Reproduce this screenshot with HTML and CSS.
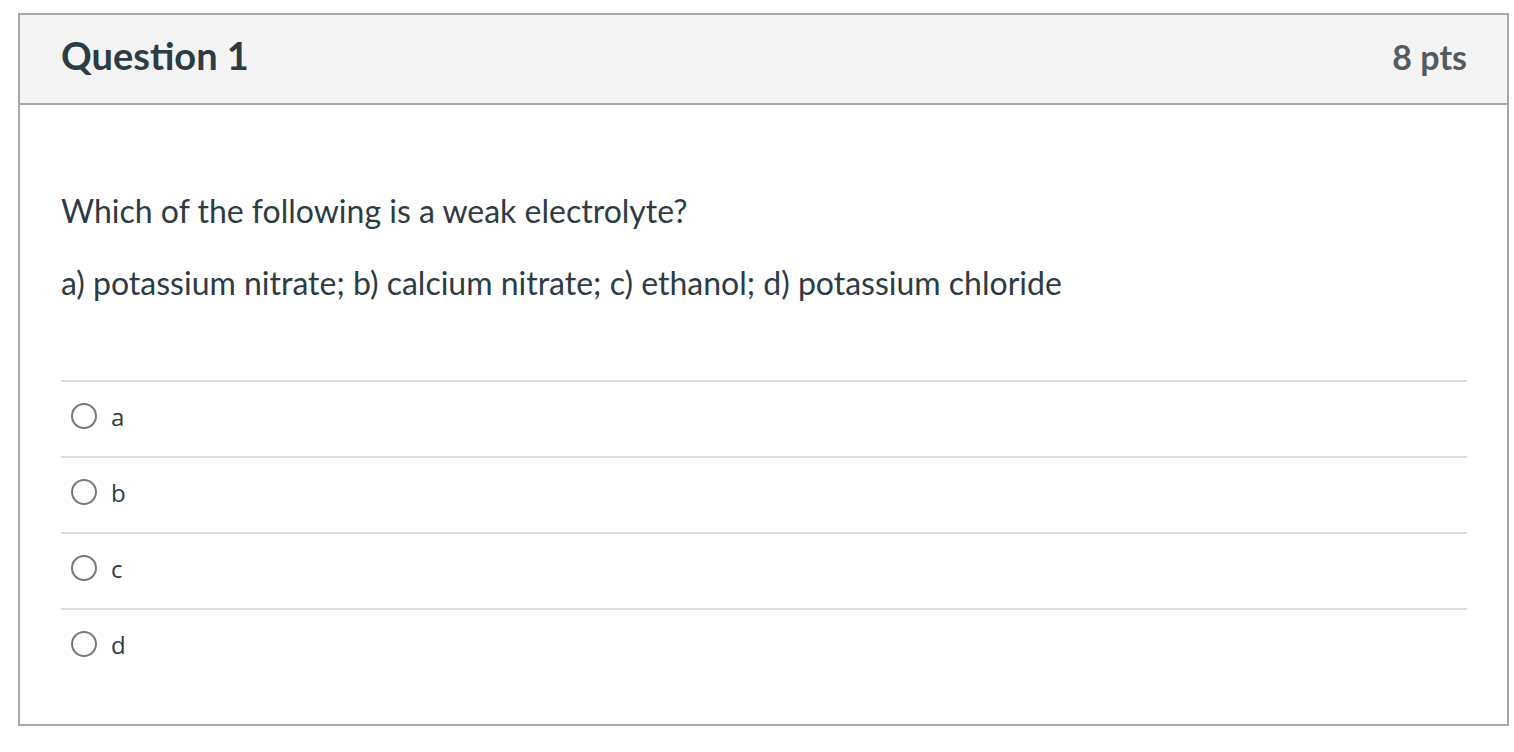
FILE: index.html
```html
<!DOCTYPE html>
<html lang="en">
<head>
<meta charset="utf-8">
<title>Question 1</title>
<link rel="stylesheet" href="styles.css">
</head>
<body>
<div class="quiz">
  <div class="quiz-header">
    <h2 class="quiz-title">Question 1</h2>
    <div class="quiz-points">8 pts</div>
  </div>
  <div class="quiz-body">
    <div class="question-text">
      <p>Which of the following is a weak electrolyte?</p>
      <p>a) potassium nitrate; b) calcium nitrate; c) ethanol; d) potassium chloride</p>
    </div>
    <div class="answers">
      <label class="answer"><span class="radio"></span><span class="answer-label">a</span></label>
      <label class="answer"><span class="radio"></span><span class="answer-label">b</span></label>
      <label class="answer"><span class="radio"></span><span class="answer-label">c</span></label>
      <label class="answer"><span class="radio"></span><span class="answer-label">d</span></label>
    </div>
  </div>
</div>
</body>
</html>
```
FILE: styles.css
```css
html, body {
  margin: 0;
  padding: 0;
  background: #ffffff;
}

body {
  font-family: Lato, "Open Sans", sans-serif;
  color: #2d3b45;
}

.quiz {
  margin: 13px 5px 0 18px;
  border: 2px solid #a8a8a8;
  box-sizing: border-box;
  height: 713px;
}

.quiz-header {
  display: flex;
  align-items: center;
  justify-content: space-between;
  height: 90px;
  padding: 0 40px 5px 41px;
  box-sizing: border-box;
  background: #f4f4f4;
  border-bottom: 2px solid #a8a8a8;
}

.quiz-title {
  margin: 0 0 3px 0;
  font-size: 38px;
  font-weight: 700;
  color: #2d3b45;
}

.quiz-points {
  font-size: 34px;
  font-weight: 700;
  color: #555a5f;
}

.quiz-body {
  padding: 83px 40px 0 41px;
}

.question-text p {
  margin: 0 0 27px 0;
  font-size: 32px;
  line-height: 45px;
}

.answers {
  margin-top: 75px;
}

.answer {
  display: flex;
  align-items: center;
  gap: 14px;
  height: 74px;
  box-sizing: border-box;
  height: 76px;
  padding: 0 0 6px 10px;
  border-top: 2px solid #dcdcdc;
}

.answer:first-child {
  border-top-color: #dcdcdc;
}

.radio {
  width: 22px;
  height: 22px;
  border: 2px solid #777777;
  border-radius: 50%;
  flex: none;
}

.answer-label {
  font-family: "Open Sans", sans-serif;
  font-size: 24px;
  color: #2d3b45;
}
```
